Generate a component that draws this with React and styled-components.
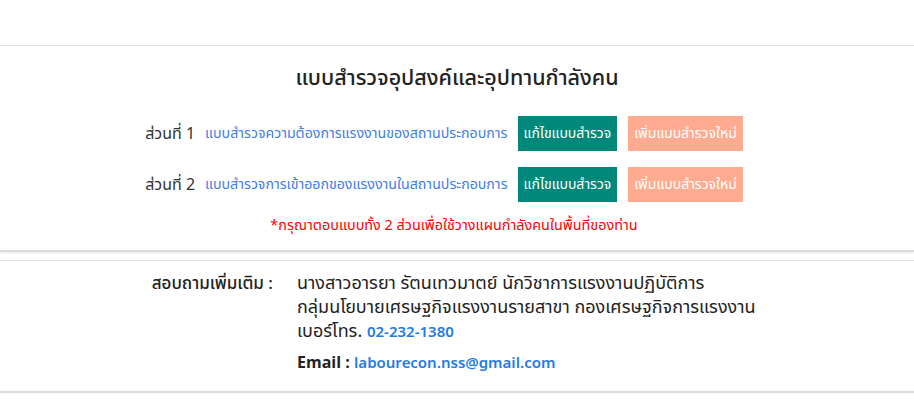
import styled, { createGlobalStyle } from "styled-components";

const GlobalStyle = createGlobalStyle`
  html, body {
    margin: 0;
    padding: 0;
    background: #fff;
  }
  body {
    font-family: "Noto Sans Thai", "Noto Sans", "DejaVu Sans", sans-serif;
    color: #212529;
  }
`;

const surveys = [
  { no: 1, name: "แบบสำรวจความต้องการแรงงานของสถานประกอบการ" },
  { no: 2, name: "แบบสำรวจการเข้าออกของแรงงานในสถานประกอบการ" },
];

export default function App() {
  return (
    <>
      <GlobalStyle />
      <Page>
        <Card>
          <Title>แบบสำรวจอุปสงค์และอุปทานกำลังคน</Title>
          <Rows>
            {surveys.map((s) => (
              <Row key={s.no}>
                <Part>ส่วนที่ {s.no}</Part>
                <SurveyLink>{s.name}</SurveyLink>
                <Button $tone="edit">แก้ไขแบบสำรวจ</Button>
                <Button $tone="add">เพิ่มแบบสำรวจใหม่</Button>
              </Row>
            ))}
          </Rows>
          <Note>*กรุณาตอบแบบทั้ง 2 ส่วนเพื่อใช้วางแผนกำลังคนในพื้นที่ของท่าน</Note>
        </Card>
        <Card $contact>
          <Contact>
            <Label>สอบถามเพิ่มเติม :</Label>
            <Details>
              <Line>นางสาวอารยา รัตนเทวมาตย์ นักวิชาการแรงงานปฏิบัติการ</Line>
              <Line>กลุ่มนโยบายเศรษฐกิจแรงงานรายสาขา กองเศรษฐกิจการแรงงาน</Line>
              <Line>
                เบอร์โทร. <Blue>02-232-1380</Blue>
              </Line>
              <EmailLine>
                <b>Email :</b> <Blue>labourecon.nss@gmail.com</Blue>
              </EmailLine>
            </Details>
          </Contact>
        </Card>
      </Page>
    </>
  );
}

const Page = styled.div`
  display: flex;
  flex-direction: column;
  gap: 8px;
  padding-top: 45px;
`;

const Card = styled.section`
  background: #fff;
  border-top: 1px solid #e2e2e2;
  border-bottom: 2px solid #dcdcdc;
  box-shadow: 0 1px 2px rgba(0, 0, 0, 0.1);
  padding: ${(p) => (p.$contact ? "11px 0 16px" : "18px 0 14px")};
`;

const Title = styled.h2`
  margin: 0;
  text-align: center;
  font-size: 21.5px;
  font-weight: 500;
  color: #222;
  line-height: 30px;
`;

const Rows = styled.div`
  margin-top: 22px;
  padding-right: 26px;
  display: flex;
  flex-direction: column;
  gap: 16px;
  align-items: center;
`;

const Row = styled.div`
  display: flex;
  align-items: center;
  font-size: 14.2px;
`;

const Part = styled.span`
  color: #333;
  font-size: 16px;
  margin-right: 10px;
`;

const SurveyLink = styled.a`
  color: #3f7de8;
  margin-right: 10px;
  cursor: pointer;
`;

const Button = styled.button`
  border: none;
  font-family: inherit;
  font-size: 14px;
  line-height: 35px;
  color: #fff;
  height: 35px;
  padding: 0 6px;
  margin-right: 11px;
  background: ${(p) => (p.$tone === "edit" ? "#00897b" : "#ffab91")};
  cursor: pointer;

  &:last-child {
    margin-right: 0;
  }
`;

const Note = styled.p`
  margin: 14px 0 0;
  padding-right: 6px;
  text-align: center;
  color: #ff0000;
  font-size: 14.4px;
  line-height: 20px;
`;

const Contact = styled.div`
  display: flex;
  gap: 24px;
  font-size: 17px;
  color: #222;
`;

const Label = styled.div`
  width: 273px;
  text-align: right;
  font-weight: 500;
  line-height: 24px;
`;

const Details = styled.div`
  display: flex;
  flex-direction: column;
`;

const Line = styled.div`
  height: 24px;
  line-height: 24px;
  font-size: 18px;
`;

const EmailLine = styled.div`
  margin-top: 7px;
  height: 24px;
  font-size: 16px;
  line-height: 24px;
`;

const Blue = styled.span`
  color: #1e7be6;
  font-weight: 600;
  font-size: 15px;
  line-height: 1;
`;
